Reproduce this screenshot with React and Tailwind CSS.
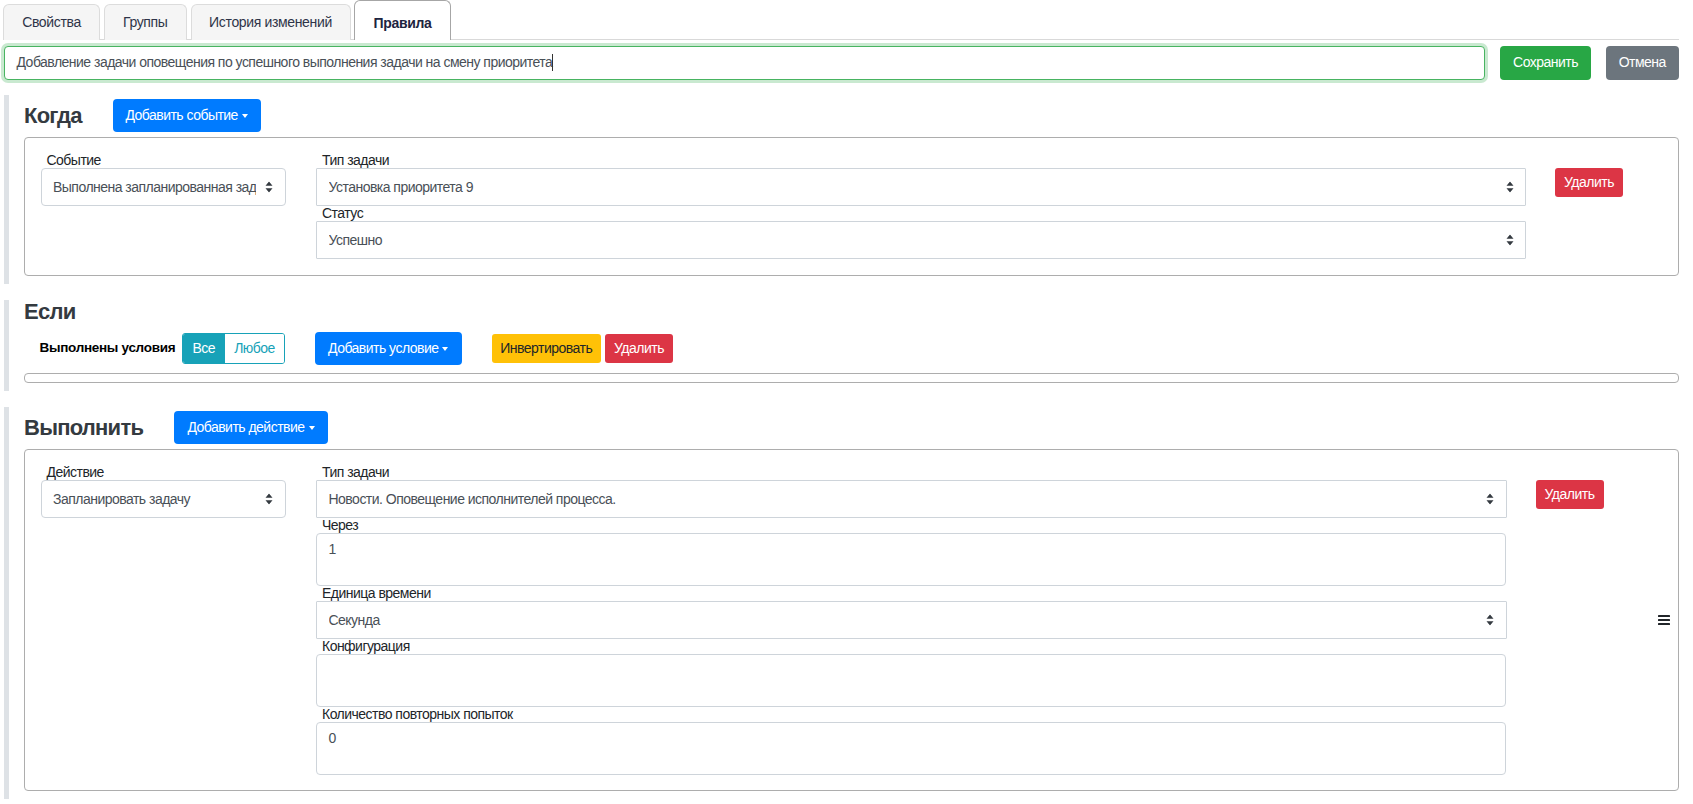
import React from 'react'

function SelectArrows() {
  return (
    <svg width="8" height="11" viewBox="0 0 8 11" className="pointer-events-none absolute right-[12.5px] top-1/2 -translate-y-1/2">
      <path d="M4 0 L7.5 4.3 L0.5 4.3 Z M0.5 6.7 L7.5 6.7 L4 11 Z" fill="#343a40" />
    </svg>
  )
}

function Field({ label, children }) {
  return (
    <div>
      <label className="block h-[15px] pl-[6px] text-[14px] leading-[15px] text-[#212529]">{label}</label>
      {children}
    </div>
  )
}

function SelectBox({ value, square }) {
  return (
    <div className="relative h-[38px]">
      <select
        defaultValue={value}
        className={`h-full w-full appearance-none border border-[#ced4da] bg-white pl-[11.5px] pr-[29px] text-[14px] text-[#495057] outline-none ${square ? 'rounded-[1px]' : 'rounded-[4px]'}`}
      >
        <option>{value}</option>
      </select>
      <SelectArrows />
    </div>
  )
}

function AreaBox({ value }) {
  return (
    <textarea
      readOnly
      defaultValue={value}
      className="block h-[53px] w-[calc(100%-1px)] resize-none rounded-[4px] border border-[#ced4da] bg-white px-[11.5px] py-[6px] text-[14px] leading-[18px] text-[#495057] outline-none"
    />
  )
}

function Caret() {
  return <span className="ml-[4px] inline-block h-0 w-0 border-x-[3.5px] border-t-[4px] border-x-transparent border-t-white" />
}

function AddButton({ title, className }) {
  return (
    <button className={`flex h-[33px] items-center justify-center rounded-[4px] bg-[#007bff] text-[14px] text-white ${className}`}>
      {title}
      <Caret />
    </button>
  )
}

function DeleteButton({ className }) {
  return (
    <button className={`flex h-[29px] w-[68px] items-center justify-center rounded-[3px] bg-[#dc3545] text-[14px] text-white ${className}`}>
      Удалить
    </button>
  )
}

function Tab({ title, active, className }) {
  if (active) {
    return (
      <div className={`relative flex h-[40px] items-center justify-center rounded-t-[6px] border border-b-0 border-[#a6a6a6] bg-white pt-[6px] text-[14px] font-bold tracking-[-0.35px] text-[#1d2440] ${className}`}>
        {title}
      </div>
    )
  }
  return (
    <div className={`mt-[4px] flex h-[36px] items-center justify-center rounded-t-[6px] border border-b-0 border-[#dcdcdc] bg-[#f5f5f5] text-[14px] tracking-[-0.35px] text-[#2e3448] ${className}`}>
      {title}
    </div>
  )
}

function App() {
  return (
    <div className="h-[804px] w-[1693px] overflow-hidden bg-white font-['Liberation_Sans',Arial,sans-serif] tracking-[-0.52px]">
      <div className="ml-[3px] mr-[14.5px] flex h-[40px] gap-[3.5px] border-b border-[#d9d9d9]">
        <Tab title="Свойства" className="w-[97px]" />
        <Tab title="Группы" className="w-[83.5px]" />
        <Tab title="История изменений" className="w-[160px]" />
        <Tab title="Правила" active className="w-[97px]" />
      </div>

      <div className="mt-[6px] ml-[3.5px] flex h-[34px]">
        <div className="flex h-[33.5px] w-[1481.5px] items-center rounded-[4px] border border-[#48b461] bg-white pl-[12px] text-[14px] text-[#495057] shadow-[0_0_0_3px_rgba(40,167,69,0.25)]">
          Добавление задачи оповещения по успешного выполнения задачи на смену приоритета
          <span className="h-[17px] w-[1px] bg-[#333]" />
        </div>
        <button className="ml-[15px] h-[33.5px] w-[91px] rounded-[4px] bg-[#28a745] text-[14px] text-white">Сохранить</button>
        <button className="ml-[15px] h-[33.5px] w-[72.5px] rounded-[4px] bg-[#6c757d] text-[14px] text-white">Отмена</button>
      </div>

      {/* Когда */}
      <section className="mt-[15px] ml-[4px] mr-[14.5px] h-[189px] border-l-[5px] border-[#dee2e6] pl-[15px] pt-[4px]">
        <div className="flex items-center">
          <h2 className="mr-[31px] text-[22px] font-bold leading-[33px] tracking-[-0.75px] text-[#343a40]">Когда</h2>
          <AddButton title="Добавить событие" className="w-[148px]" />
        </div>
        <div className="mt-[4.5px] flex h-[139.5px] rounded-[4px] border border-[#adadad] pl-[15.5px] pt-[15.5px]">
          <div className="w-[245px]">
            <Field label="Событие">
              <SelectBox value="Выполнена запланированная задача" />
            </Field>
          </div>
          <div className="ml-[30.5px] w-[1210px]">
            <Field label="Тип задачи">
              <SelectBox value="Установка приоритета 9" square />
            </Field>
            <Field label="Статус">
              <SelectBox value="Успешно" square />
            </Field>
          </div>
          <DeleteButton className="ml-[29px] mt-[15px]" />
        </div>
      </section>

      {/* Если */}
      <section className="mt-[16px] ml-[4px] mr-[14.5px] h-[91px] border-l-[5px] border-[#dee2e6] pl-[15px]">
        <h2 className="h-[24px] text-[22px] font-bold leading-[24px] tracking-[-0.75px] text-[#343a40]">Если</h2>
        <div className="mt-[8px] flex h-[33px] items-center pl-[15.5px]">
          <span className="w-[142px] text-[13.5px] font-bold tracking-[-0.3px] text-black">Выполнены условия</span>
          <div className="flex h-[31px] w-[103.5px] overflow-hidden rounded-[3px] border border-[#17a2b8] text-[14px]">
            <span className="flex w-[42.5px] items-center justify-center bg-[#17a2b8] text-white">Все</span>
            <span className="flex flex-1 items-center justify-center bg-white text-[#17a2b8]">Любое</span>
          </div>
          <AddButton title="Добавить условие" className="ml-[30px] w-[146.5px]" />
          <button className="ml-[30px] flex h-[29px] w-[109.5px] items-center justify-center rounded-[3px] bg-[#ffc107] text-[14px] text-[#212529]">
            Инвертировать
          </button>
          <DeleteButton className="ml-[4px]" />
        </div>
        <div className="mt-[8px] h-[10px] rounded-[4px] border border-[#adadad]" />
      </section>

      {/* Выполнить */}
      <section className="mt-[16px] ml-[4px] mr-[14.5px] h-[392px] border-l-[5px] border-[#dee2e6] pl-[15px] pt-[4px]">
        <div className="flex items-center">
          <h2 className="mr-[31px] text-[22px] font-bold leading-[33px] tracking-[-0.75px] text-[#343a40]">Выполнить</h2>
          <AddButton title="Добавить действие" className="w-[153.5px]" />
        </div>
        <div className="mt-[4.5px] flex h-[342.5px] rounded-[4px] border border-[#adadad] pl-[15.5px] pr-[8px] pt-[15.5px]">
          <div className="w-[245px]">
            <Field label="Действие">
              <SelectBox value="Запланировать задачу" />
            </Field>
          </div>
          <div className="ml-[30.5px] w-[1190.5px]">
            <Field label="Тип задачи">
              <SelectBox value="Новости. Оповещение исполнителей процесса." square />
            </Field>
            <Field label="Через">
              <AreaBox value="1" />
            </Field>
            <Field label="Единица времени">
              <SelectBox value="Секунда" square />
            </Field>
            <Field label="Конфигурация">
              <AreaBox value="" />
            </Field>
            <Field label="Количество повторных попыток">
              <AreaBox value="0" />
            </Field>
          </div>
          <DeleteButton className="ml-[29px] mt-[15px]" />
          <svg width="12" height="10" viewBox="0 0 12 10" className="ml-auto self-center -mt-[16px]">
            <rect x="0" y="0" width="12" height="2" rx="0.6" fill="#212529" />
            <rect x="0" y="4" width="12" height="2" rx="0.6" fill="#212529" />
            <rect x="0" y="8" width="12" height="2" rx="0.6" fill="#212529" />
          </svg>
        </div>
      </section>
    </div>
  )
}

export default App
